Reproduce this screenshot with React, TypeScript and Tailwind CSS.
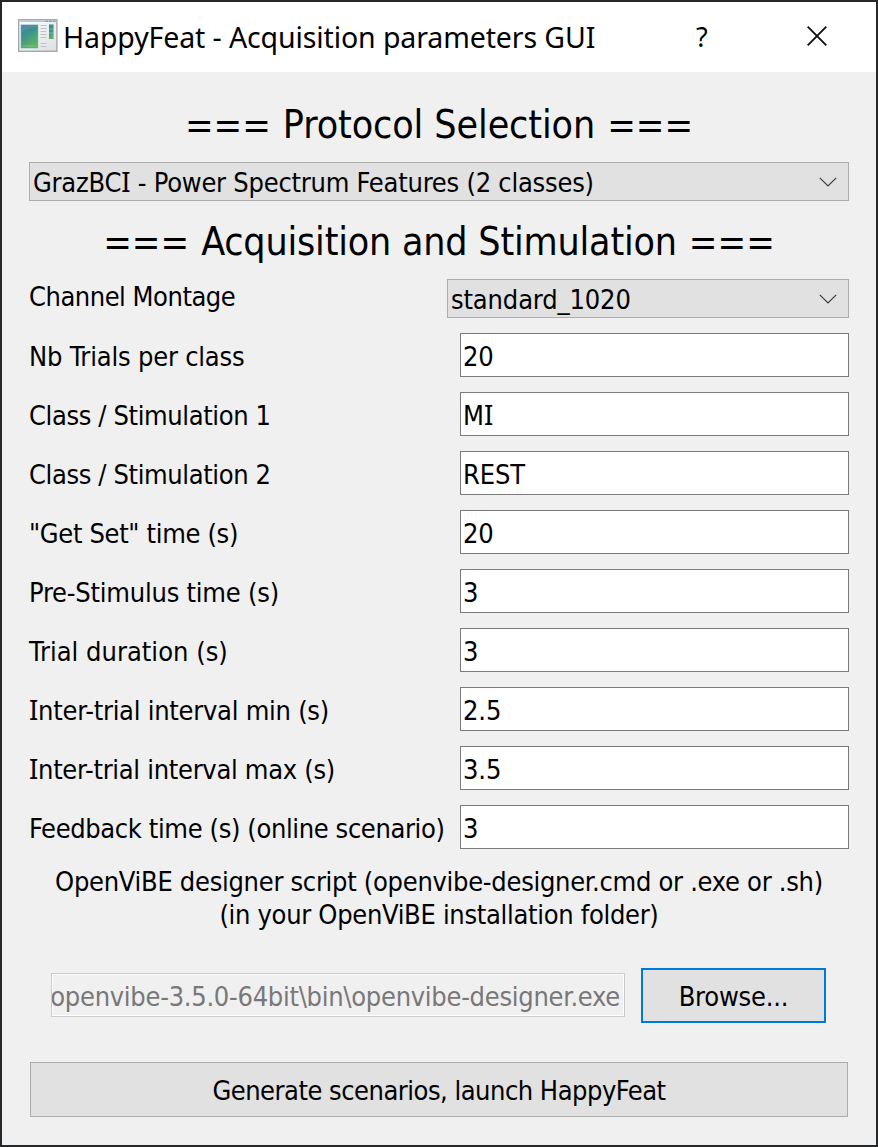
import { Fragment } from 'react';

const fields = [
  { label: 'Nb Trials per class', value: '20', labelSpacing: 'tracking-[-0.2px]' },
  { label: 'Class / Stimulation 1', value: 'MI', labelSpacing: 'tracking-[-0.38px]' },
  { label: 'Class / Stimulation 2', value: 'REST', labelSpacing: 'tracking-[-0.38px]' },
  { label: '"Get Set" time (s)', value: '20', labelSpacing: 'tracking-[-0.34px]' },
  { label: 'Pre-Stimulus time (s)', value: '3', labelSpacing: 'tracking-[-0.23px]' },
  { label: 'Trial duration (s)', value: '3', labelSpacing: 'tracking-[0.02px]' },
  { label: 'Inter-trial interval min (s)', value: '2.5', labelSpacing: 'tracking-[-0.26px]' },
  { label: 'Inter-trial interval max (s)', value: '3.5', labelSpacing: 'tracking-[-0.3px]' },
  { label: 'Feedback time (s) (online scenario)', value: '3', labelSpacing: 'tracking-[-0.38px]' },
];

function Label({ text }: { text: string }) {
  return (
    <>
      {text.split('I').map((part, i) => (
        <Fragment key={i}>
          {i > 0 && <span className="font-['Noto_Sans',sans-serif] text-[27.5px] leading-none">I</span>}
          {part}
        </Fragment>
      ))}
    </>
  );
}

function Heading({ text, spacing }: { text: string; spacing: string }) {
  return (
    <h1 className="flex items-baseline justify-center gap-[12px] whitespace-nowrap text-[39px] leading-[48px]">
      <span className="text-[38px]">===</span>
      <span className={spacing}>{text}</span>
      <span className="text-[38px]">===</span>
    </h1>
  );
}

function ComboBox({ text, className }: { text: string; className: string }) {
  return (
    <div className={`flex h-[39px] items-center justify-between border border-[#adadad] bg-[#e1e1e1] pr-[11px] pl-[3px] ${className}`}>
      <span className="pt-[3px] leading-[34px]">
        <Label text={text} />
      </span>
      <svg width="18" height="10" viewBox="0 0 18 10" fill="none" stroke="#3c3c3c" strokeWidth="1.2" className="mt-px">
        <path d="M.8.8 9 9 17.2.8" />
      </svg>
    </div>
  );
}

function AppIcon() {
  return (
    <svg width="40" height="34" viewBox="0 0 40 34">
      <defs>
        <linearGradient id="screen" x1="0" y1="0" x2="0.5" y2="1">
          <stop offset="0" stopColor="#3f7aa6" />
          <stop offset="0.5" stopColor="#3f9488" />
          <stop offset="1" stopColor="#5cb466" />
        </linearGradient>
        <linearGradient id="frame" x1="0" y1="0" x2="1" y2="1">
          <stop offset="0" stopColor="#ffffff" />
          <stop offset="1" stopColor="#dcdfe3" />
        </linearGradient>
      </defs>
      <rect x="0.7" y="0.7" width="38.2" height="31.6" fill="url(#frame)" stroke="#a3a8ad" strokeWidth="1.4" />
      <path d="M1.4 2.2H38.2" stroke="#bcc4cd" strokeWidth="1.8" />
      <path d="M27 2.3h3M31 2.3h3M35 2.3h2.500" stroke="#8f98a3" strokeWidth="1.2" />
      <rect x="2.800" y="5.500" width="17.400" height="24" fill="url(#screen)" stroke="#d5e3ea" strokeWidth="0.6" />
      <path d="M3.200 14C8 10 14 8.500 20 8.500V6H3.200Z" fill="#6aa0bd" opacity="0.35" />
      <path d="M5 27h13" stroke="#8bcb86" strokeWidth="0.7" />
      <path d="M22.500 6.500h6M22.500 9.500h6M22.500 12.500h6M22.500 15.500h6M22.500 18.500h6M22.500 24.500h6M22.500 27.500h6" stroke="#bfc3c7" strokeWidth="1" />
      <rect x="31" y="5.500" width="4.600" height="14.500" fill="url(#screen)" />
      <path d="M31 10h4.600M31 14h4.600" stroke="#9ccbc4" strokeWidth="0.5" />
    </svg>
  );
}

export default function App() {
  return (
    <div className="flex h-[1147px] w-[878px] flex-col border-2 border-[#262728] bg-[#f0f0f0] font-['DejaVu_Sans_Condensed','DejaVu_Sans',sans-serif] text-[27px] text-black">
      <header className="flex h-[70px] shrink-0 items-center bg-white pb-[2px] pl-4">
        <AppIcon />
        <span className="w-[638px] pt-[2px] pl-[5px] font-['Noto_Sans',sans-serif] text-[28.5px] leading-[40px] tracking-[-0.11px] whitespace-nowrap">
          HappyFeat - Acquisition parameters GUI
        </span>
        <span className="w-[14px] font-['Noto_Sans',sans-serif] text-[27px] leading-none">?</span>
        <svg width="20" height="20" viewBox="0 0 20 20" className="ml-[97px]" stroke="#111" strokeWidth="1.9">
          <path d="M.7.7 19.300 19.300M19.300.7.7 19.300" />
        </svg>
      </header>

      <main className="flex flex-col px-[27px] pt-[29px]">
        <Heading text="Protocol Selection" spacing="tracking-[-0.1px]" />
        <ComboBox text="GrazBCI - Power Spectrum Features (2 classes)" className="mt-[13px] tracking-[-0.24px]" />
        <div className="mt-[17px]">
          <Heading text="Acquisition and Stimulation" spacing="tracking-[-0.2px]" />
        </div>

        <div className="mt-[13px] flex h-[39px] items-start justify-between whitespace-nowrap">
          <span className="leading-[36px] tracking-[-0.48px]">Channel Montage</span>
          <ComboBox text="standard_1020" className="w-[402px] tracking-[-0.15px]" />
        </div>

        <div className="mt-[15px] flex flex-col gap-[15px] whitespace-nowrap">
          {fields.map((f) => (
            <div key={f.label} className="flex h-[44px] items-center justify-between">
              <span className={`pt-[3px] leading-[36px] ${f.labelSpacing}`}>
                <Label text={f.label} />
              </span>
              <div className="flex h-[44px] w-[389px] items-center border border-[#7a7a7a] bg-white pl-[2px] tracking-[-0.1px]">
                <span className="pt-[3px] leading-[36px]">
                  <Label text={f.value} />
                </span>
              </div>
            </div>
          ))}
        </div>

        <div className="mt-[16px] text-center leading-[33px] whitespace-nowrap">
          <p className="tracking-[-0.29px]">OpenViBE designer script (openvibe-designer.cmd or .exe or .sh)</p>
          <p className="tracking-[-0.31px]">(in your OpenViBE installation folder)</p>
        </div>

        <div className="mt-[37px] flex h-[55px] items-start justify-between pr-[23px] pl-[22px]">
          <div className="mt-[5px] flex h-[44px] w-[574px] items-center justify-end overflow-hidden border border-[#cccccc] pr-[4px] whitespace-nowrap text-[#787878] shadow-[inset_0_0_0_1px_#fff]">
            <span className="pt-[4px] leading-[36px] tracking-[-0.28px]">openvibe-3.5.0-64bit\bin\openvibe-designer.exe</span>
          </div>
          <button className="h-[55px] w-[185px] border-2 border-[#0078d7] bg-[#e1e1e1] pt-[4px] tracking-[-0.2px]">Browse...</button>
        </div>

        <button className="mx-px mt-[39px] h-[55px] border border-[#adadad] bg-[#e1e1e1] pt-[4px] tracking-[-0.5px]">
          Generate scenarios, launch HappyFeat
        </button>
      </main>
    </div>
  );
}
